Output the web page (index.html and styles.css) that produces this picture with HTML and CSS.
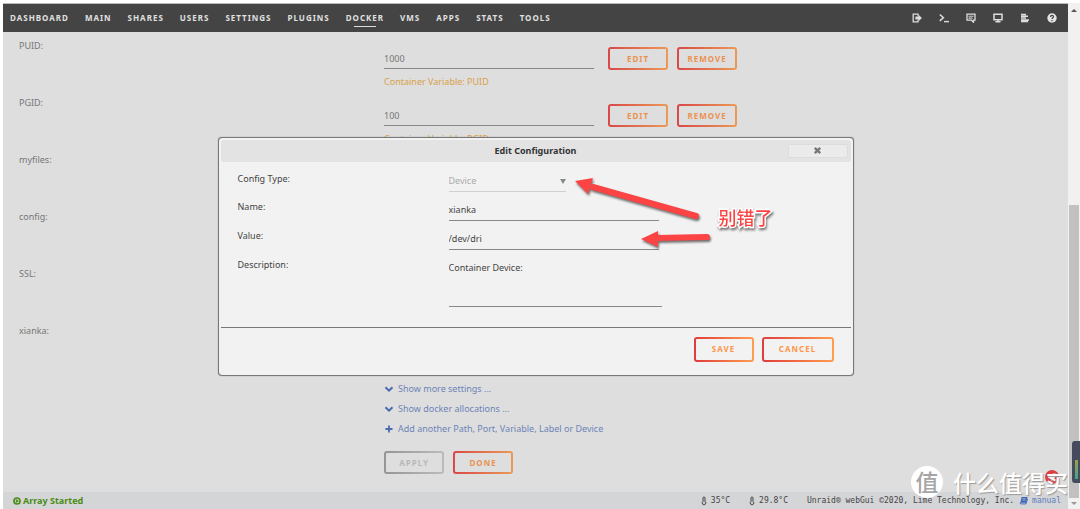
FILE: index.html
```html
<!DOCTYPE html>
<html lang="en">
<head>
<meta charset="utf-8">
<title>Edit Configuration</title>
<link rel="stylesheet" href="styles.css">
</head>
<body>
<div class="page">
  <header class="topbar">
    <nav class="menu">
      <a href="#">DASHBOARD</a>
      <a href="#">MAIN</a>
      <a href="#">SHARES</a>
      <a href="#">USERS</a>
      <a href="#">SETTINGS</a>
      <a href="#">PLUGINS</a>
      <a href="#" class="active">DOCKER</a>
      <a href="#">VMS</a>
      <a href="#">APPS</a>
      <a href="#">STATS</a>
      <a href="#">TOOLS</a>
    </nav>
    <div class="tools">
      <button type="button" aria-label="Log out"><svg viewBox="0 0 10 10"><path d="M5 1.2H1.2v7.6H6V7.2M6 2.8V1.2H5" fill="none" stroke="#ddd" stroke-width="1.3"/><path d="M3.4 3.6h3V1.6L9.9 5 6.400 8.400v-2h-3z" fill="#ddd"/></svg></button>
      <button type="button" aria-label="Terminal"><svg viewBox="0 0 10 10"><path d="M.8 1.5l3.6 3.2L.8 7.9" fill="none" stroke="#ddd" stroke-width="1.5"/><path d="M5 8.6h5" stroke="#ddd" stroke-width="1.4"/></svg></button>
      <button type="button" aria-label="Feedback"><svg viewBox="0 0 10 10"><path d="M1 1.2h8v6H7.500v2L5.500 7.200H1z" fill="none" stroke="#ddd" stroke-width="1.300"/><path d="M2.500 3.300h5M2.500 5.100h4" stroke="#ccc" stroke-width="1.100"/></svg></button>
      <button type="button" aria-label="System information"><svg viewBox="0 0 10 10"><path d="M1 1.3h8v5.4H1z" fill="none" stroke="#ddd" stroke-width="1.5"/><path d="M2.500 8.800h5M5 7v2" stroke="#ddd" stroke-width="1.500"/></svg></button>
      <button type="button" aria-label="Log"><svg viewBox="0 0 10 10"><path d="M1 1.500h5M1 3.300h7M1 5.100h5M1 6.900h8M1 8.600h7" stroke="#ddd" stroke-width="1.500"/></svg></button>
      <button type="button" aria-label="Help"><svg viewBox="0 0 10 10"><circle cx="5" cy="5" r="4.700" fill="#e4e4e4"/><path d="M3.500 3.900c0-2 3-1.900 3-.2 0 1.100-1.500 1.100-1.500 2.300M5 7v1.200" fill="none" stroke="#444" stroke-width="1.200"/></svg></button>
    </div>
  </header>

  <main class="content">
    <div class="row">
      <label for="puid">PUID:</label>
      <div class="field">
        <div class="line"><input id="puid" class="text" type="text" value="1000"><button type="button" class="btn">EDIT</button><button type="button" class="btn">REMOVE</button></div>
        <p class="help">Container Variable: PUID</p>
      </div>
    </div>
    <div class="row">
      <label for="pgid">PGID:</label>
      <div class="field">
        <div class="line"><input id="pgid" class="text" type="text" value="100"><button type="button" class="btn">EDIT</button><button type="button" class="btn">REMOVE</button></div>
        <p class="help">Container Variable: PGID</p>
      </div>
    </div>
    <div class="row"><span class="name">myfiles:</span></div>
    <div class="row"><span class="name">config:</span></div>
    <div class="row"><span class="name">SSL:</span></div>
    <div class="row"><span class="name">xianka:</span></div>
    <div class="row last">
      <div class="more">
        <a href="#"><svg viewBox="0 0 10 10"><path d="M1.500 3.200L5 6.700l3.500-3.500" fill="none" stroke="#4a6ab0" stroke-width="2"/></svg>Show more settings ...</a>
        <a href="#"><svg viewBox="0 0 10 10"><path d="M1.500 3.200L5 6.700l3.500-3.500" fill="none" stroke="#4a6ab0" stroke-width="2"/></svg>Show docker allocations ...</a>
        <a href="#"><svg viewBox="0 0 10 10"><path d="M5 1.500v7M1.500 5h7" fill="none" stroke="#4a6ab0" stroke-width="1.800"/></svg>Add another Path, Port, Variable, Label or Device</a>
        <div class="line actions"><button type="button" class="btn" disabled>APPLY</button><button type="button" class="btn">DONE</button></div>
      </div>
    </div>
  </main>

  <footer class="status">
    <strong class="array"><svg viewBox="0 0 10 10"><circle cx="5" cy="5" r="3.800" fill="none" stroke="#4a8c14" stroke-width="2"/><path d="M3.500 2.600L7.400 5 3.500 7.400z" fill="#4a8c14"/></svg>Array Started</strong>
    <div class="info">
      <span class="temp"><svg viewBox="0 0 6 10"><path d="M2 5.500V2a1 1 0 0 1 2 0v3.500a1.800 1.800 0 1 1-2 0z" fill="#ccc" stroke="#444" stroke-width="1"/></svg>35°C</span>
      <span class="temp"><svg viewBox="0 0 6 10"><path d="M2 5.500V2a1 1 0 0 1 2 0v3.500a1.800 1.800 0 1 1-2 0z" fill="#ccc" stroke="#444" stroke-width="1"/></svg>29.8°C</span>
      <span>Unraid® webGui ©2020, Lime Technology, Inc.</span>
      <a href="#"><svg viewBox="0 0 10 10"><path d="M3 1h6.500L7.800 7.500H1.500z" fill="#3d62b8"/><path d="M1.500 7.200q-.6 1.600.8 1.600h5.500L9.600 3" fill="none" stroke="#3d62b8"/><path d="M4 3h3.500M3.600 4.600h3.500" stroke="#d5d6d8" stroke-width=".7"/></svg>manual</a>
    </div>
  </footer>

  <div class="overlay">
    <form class="dialog" role="dialog" aria-labelledby="title">
      <div class="titlebar">
        <h1 id="title">Edit Configuration</h1>
        <button type="button" class="close" aria-label="Close"><svg viewBox="0 0 10 10"><path d="M2 2l6 6M8 2L2 8" stroke="#777" stroke-width="2.600"/></svg></button>
      </div>
      <div class="fields">
        <label for="type">Config Type:</label>
        <div class="pick"><select id="type" disabled><option>Device</option></select></div>
        <label for="name">Name:</label>
        <input id="name" class="text" type="text" value="xianka">
        <label for="value">Value:</label>
        <input id="value" class="text" type="text" value="/dev/dri">
        <label for="desc">Description:</label>
        <textarea id="desc">Container Device:</textarea>
      </div>
      <div class="buttons"><button type="button" class="btn">SAVE</button><button type="button" class="btn wide">CANCEL</button></div>
      <svg class="arrows" viewBox="0 0 140 80">
        <g fill="#fc4444" stroke="#fc4444">
          <path d="M20 13L123 42" stroke-width="6" stroke-linecap="round"/>
          <path d="M2 7l18-3-5 16z" stroke="none"/>
          <path d="M84 64l50-1" stroke-width="6" stroke-linecap="round"/>
          <path d="M68 65l17-8v16z" stroke="none"/>
        </g>
      </svg>
      <p class="note" lang="zh">别错了</p>
    </form>
  </div>

  <svg class="totop" viewBox="0 0 14 14"><circle cx="7" cy="7" r="7" fill="#d94040"/><path d="M2.500 8Q7 2 11.500 4q-1 4-5 7L5.500 8.500z" fill="#eee"/></svg>
  <div class="watermark" lang="zh"><span class="badge">值</span><span>什么值得买</span></div>
</div>
<div class="scroll" aria-hidden="true">
  <span class="tri up"></span>
  <span class="thumb"></span>
  <span class="tri down"></span>
  <span class="meter"></span>
</div>
</body>
</html>
```
FILE: styles.css
```css
* { box-sizing: border-box; }

body {
  margin: 0;
  padding: 3px 0 0 3px;
  min-height: 100vh;
  display: flex;
  background: #fff;
  color: #777;
  font: 9px/14px "Noto Sans", "Noto Sans CJK SC", sans-serif;
}

a { color: inherit; text-decoration: none; }
p, h1 { margin: 0; }
button, input, select, textarea { font: inherit; color: inherit; margin: 0; }
svg { display: block; flex: none; }

.page {
  position: relative;
  flex: 1;
  min-width: 0;
  display: flex;
  flex-direction: column;
  background: #dedede;
}

.topbar {
  display: flex;
  justify-content: space-between;
  align-items: center;
  height: 29px;
  padding: 0 10px 0 7px;
  background: #444;
  border-top: 1px solid #bbb;
}

.menu { display: flex; gap: 16px; color: #e0e0e0; font-size: 8px; font-weight: 700; letter-spacing: 1px; }
.menu a { position: relative; }
.menu .active::after {
  content: "";
  position: absolute;
  left: 22%;
  right: 20%;
  bottom: -2px;
  height: 1px;
  background: #ddd;
}

.tools { display: flex; gap: 16px; }
.tools button { width: 11px; height: 11px; padding: 0; border: 0; background: none; }
.tools svg { width: 10px; height: 10px; }

.content { flex: 1; padding: 0 6px 17px 16px; }

.row { display: grid; grid-template-columns: 35% 1fr; min-height: 57px; }
.row > label, .row > .name { padding-top: 7px; }
.row.last { padding-top: 8px; }
.field { padding-top: 15px; }
.line { display: flex; gap: 9px; }

.text {
  width: 210px;
  height: 22px;
  padding: 1px 0 0;
  border: 0;
  border-bottom: 1px solid #888;
  background: none;
  outline: none;
}
.line .text { margin-right: 5px; }

.help { margin-top: 5px; color: #d9a14a; }

.btn {
  --face: #dedede;
  min-width: 60px;
  height: 23px;
  padding: 0 8px;
  border: 2px solid transparent;
  border-radius: 3px;
  background:
    linear-gradient(var(--face), var(--face)) padding-box,
    linear-gradient(90deg, #d94848, #eb9a55) border-box;
  color: #ea9250;
  font-size: 8px;
  line-height: 12px;
  font-weight: 700;
  letter-spacing: 1px;
}
.btn:disabled {
  background:
    linear-gradient(var(--face), var(--face)) padding-box,
    linear-gradient(90deg, #959595, #bbb) border-box;
  color: #b8b8b8;
}

.more { grid-column: 2; display: flex; flex-direction: column; align-items: flex-start; gap: 6px; color: #6d84b8; }
.more a { display: flex; align-items: center; gap: 4px; }
.more svg { width: 10px; height: 10px; }
.actions { margin-top: 9px; }

.status {
  display: flex;
  justify-content: space-between;
  align-items: center;
  height: 17px;
  padding: 0 7px 0 10px;
  background: #d4d5d7;
}
.array { display: flex; align-items: center; gap: 2px; color: #4a8c14; }
.array svg { width: 8px; height: 8px; }
.info { display: flex; gap: 19px; color: #444; font: 8px/14px "DejaVu Sans Mono", monospace; }
.info span, .info a { display: flex; align-items: center; gap: 4px; }
.info a { margin-left: -14px; color: #5f7cc0; }
.info .temp svg { width: 6px; height: 10px; }
.info a svg { width: 9px; height: 9px; }

.overlay { position: absolute; inset: 0; display: grid; place-items: center; }

.dialog {
  position: relative;
  width: 636px;
  max-width: 100%;
  padding: 2px;
  border: 1px solid #777;
  border-radius: 4px;
  background: #f2f2f2;
  box-shadow: 0 0 1px #666;
  color: #444;
}

.titlebar {
  position: relative;
  height: 22px;
  display: flex;
  align-items: center;
  justify-content: center;
  border-radius: 3px;
  background: #e3e3e3;
}
.titlebar h1 { font-size: 9px; line-height: 14px; font-weight: 700; color: #333; }
.close {
  position: absolute;
  right: 3px;
  top: 4px;
  width: 60px;
  height: 14px;
  padding: 0;
  display: grid;
  place-items: center;
  border: 1px solid #dcdcdc;
  border-radius: 2px;
  background: #ebebeb;
}
.close svg { width: 9px; height: 9px; }

.fields {
  display: grid;
  grid-template-columns: 204px 1fr;
  gap: 7px;
  padding: 9px 17px 20px;
  border-bottom: 1px solid #777;
}
.fields label { padding-top: 1px; }
.pick { position: relative; width: 117px; color: #aaa; }
.pick::after {
  content: "";
  position: absolute;
  right: 0;
  top: 8px;
  border: solid transparent;
  border-width: 5px 3px 0;
  border-top-color: #888;
}
.pick select {
  display: block;
  width: 100%;
  height: 21px;
  padding: 1px 0 0;
  border: 0;
  border-bottom: 1px solid #d0d0d0;
  background: none;
  appearance: none;
  opacity: 1;
}
.fields textarea {
  display: block;
  width: 213px;
  height: 50px;
  padding: 4px 0 0;
  border: 0;
  border-bottom: 1px solid #888;
  background: none;
  resize: none;
  outline: none;
  overflow: hidden;
}

.buttons { display: flex; justify-content: flex-end; gap: 8px; padding: 9px 17px 11px; }
.buttons .btn {
  --face: #f2f2f2;
  height: 25px;
  background:
    linear-gradient(var(--face), var(--face)) padding-box,
    linear-gradient(90deg, #e03c3c, #ff9e50) border-box;
  color: #ff9548;
}
.buttons .wide { min-width: 72px; }

.arrows {
  position: absolute;
  left: 354px;
  top: 36px;
  width: 140px;
  height: 80px;
  filter: drop-shadow(1px 2px 1px rgba(0, 0, 0, .55));
  pointer-events: none;
}
.note {
  position: absolute;
  left: 500px;
  top: 66px;
  color: #fc4444;
  font: 500 18px/26px "Noto Sans CJK SC", sans-serif;
  -webkit-text-stroke: 3px #fff;
  paint-order: stroke fill;
  filter: drop-shadow(1px 2px 1px rgba(0, 0, 0, .5));
}

.totop { position: absolute; right: 9px; bottom: 25px; width: 14px; height: 14px; }
.watermark {
  position: absolute;
  right: 0;
  bottom: 11px;
  display: flex;
  align-items: center;
  gap: 10px;
  color: #fff;
  font: 500 23px/30px "Noto Sans CJK SC", sans-serif;
  text-shadow: 1px 1px 1px #999;
  white-space: nowrap;
}
.badge {
  width: 32px;
  height: 32px;
  border-radius: 50%;
  background: #fff;
  color: #a5a5a5;
  font-size: 23px;
  line-height: 30px;
  text-align: center;
  text-shadow: none;
}

.scroll {
  position: relative;
  width: 12px;
  display: flex;
  flex-direction: column;
  align-items: center;
  padding: 6px 0 4px;
  background: #f1f1f1;
}
.tri { border: solid transparent; }
.up { border-width: 0 3px 3px; border-bottom-color: #555; }
.down { border-width: 3px 3px 0; border-top-color: #999; }
.thumb { flex: none; width: 10px; height: 59%; margin: auto 0 4px; background: #c1c1c1; }
.meter {
  position: absolute;
  right: 0;
  bottom: 26px;
  width: 8px;
  height: 42px;
  border: solid #454b5c;
  border-width: 19px 2px 4px 3px;
  border-radius: 3px 0 0 3px;
  background: linear-gradient(#9aa050, #3fa588) padding-box;
}
```
